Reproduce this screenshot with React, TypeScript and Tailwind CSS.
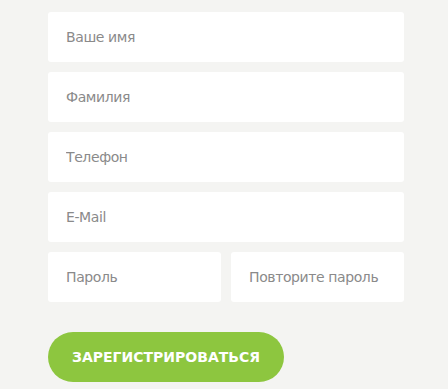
import React from "react";

const fields = ["Ваше имя", "Фамилия", "Телефон", "E-Mail"];

const inputCls =
  "w-full h-[50px] rounded-[3px] bg-white px-[18px] text-[14px] tracking-[-0.4px] text-[#555] placeholder:text-[#8a8a8a] outline-none border-0";

export default function App() {
  return (
    <div
      className="min-h-[389px] w-[448px] bg-[#f4f4f2] pt-[12px] pl-[48px]"
      style={{ fontFamily: "Verdana, 'DejaVu Sans', sans-serif" }}
    >
      <form className="flex w-[356px] flex-col gap-[10px]">
        {fields.map((f) => (
          <input key={f} type="text" placeholder={f} className={inputCls} />
        ))}
        <div className="grid grid-cols-2 gap-[10px]">
          <input type="password" placeholder="Пароль" className={inputCls} />
          <input type="password" placeholder="Повторите пароль" className={inputCls} />
        </div>
        <button
          type="button"
          className="mt-[20px] h-[50px] w-[236px] rounded-full bg-[#8dc63f] text-[14px] font-bold uppercase text-white"
        >
          Зарегистрироваться
        </button>
      </form>
    </div>
  );
}
